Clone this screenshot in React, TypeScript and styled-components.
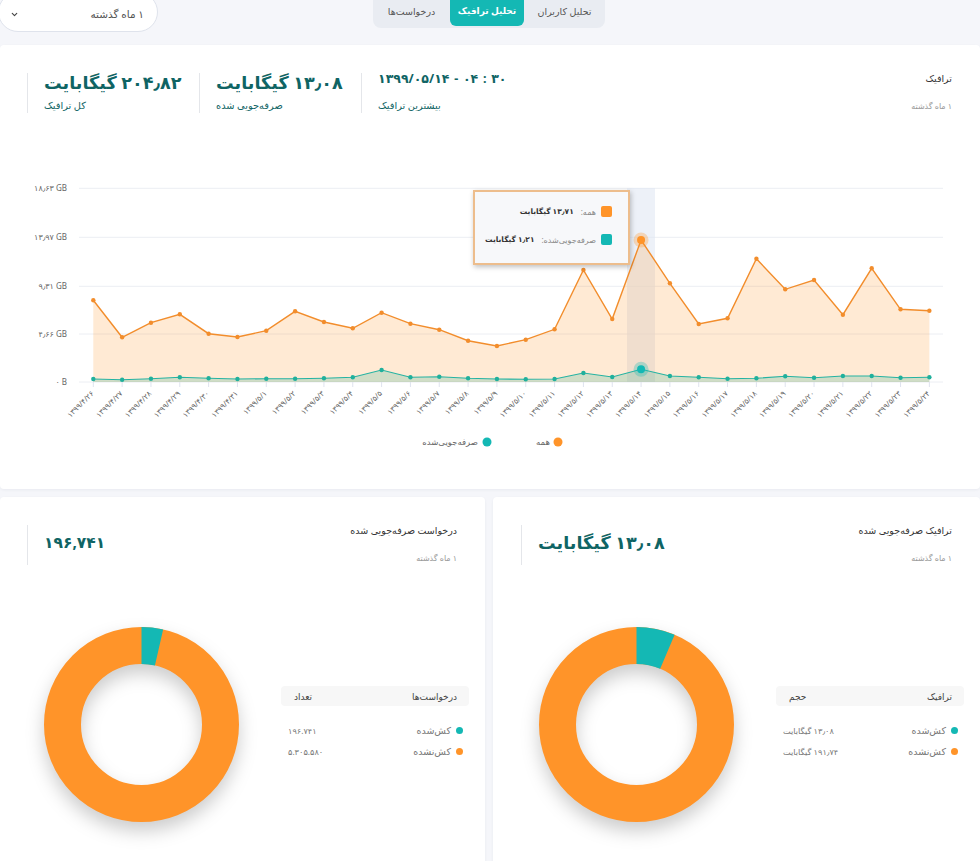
import * as React from 'react';
import styled, { createGlobalStyle } from 'styled-components';
import { ChevronDown } from 'lucide-react';

const ORANGE = '#ff9429';
const TEAL = '#14b8b4';

const GlobalStyle = createGlobalStyle`
	html, body {
		margin: 0;
		padding: 0;
		background: #f5f6fa;
	}
	body {
		font-family: "Noto Sans", "DejaVu Sans", sans-serif;
		color: #333;
	}
`;

const Page = styled.div`
	direction: rtl;
	width: 980px;
	height: 861px;
	overflow: hidden;
	background: #f5f6fa;
`;

const TopBar = styled.div`
	height: 45px;
	display: flex;
	align-items: flex-start;
`;

const Tabs = styled.div`
	display: flex;
	margin: -8px 375px 0 0;
	height: 36px;
	width: 232px;
	background: #e9ecf2;
	border-radius: 8px;
`;

const Tab = styled.div<{ $active?: boolean; $width: number }>`
	flex: 0 0 ${(p) => p.$width}px;
	display: flex;
	align-items: center;
	justify-content: center;
	padding-top: 3px;
	box-sizing: border-box;
	height: ${(p) => (p.$active ? '34px' : '36px')};
	border-radius: 6px;
	font-size: ${(p) => (p.$active ? '9px' : '9.5px')};
	font-weight: ${(p) => (p.$active ? 700 : 400)};
	color: ${(p) => (p.$active ? '#fff' : '#555')};
	background: ${(p) => (p.$active ? TEAL : 'transparent')};
`;

const Select = styled.div`
	margin: -8px auto 0 -2px;
	width: 160px;
	height: 40px;
	box-sizing: border-box;
	padding: 4px 13px 0 11px;
	background: #fff;
	border: 1px solid #dfe3ec;
	border-radius: 20px;
	display: flex;
	align-items: center;
	justify-content: space-between;
	font-size: 10.5px;
	color: #555;
`;

const Card = styled.section`
	position: relative;
	background: #fff;
	border-radius: 4px;
	box-shadow: 0 1px 3px rgba(40, 50, 90, 0.06);
`;

const TrafficCard = styled(Card)`
	height: 444px;
`;

const Header = styled.div<{ $left?: number }>`
	display: flex;
	justify-content: space-between;
	align-items: flex-start;
	padding: 28px 28px 0 ${(p) => p.$left ?? 27}px;
`;

const Titles = styled.div`
	display: flex;
	flex-direction: column;
	gap: 13px;
	margin-top: -1px;
`;

const Title = styled.div`
	font-size: 9.5px;
	line-height: 14px;
	color: #333;
`;

const Muted = styled.div`
	font-size: 8px;
	line-height: 14px;
	color: #999;
`;

const Stats = styled.div`
	display: flex;
`;

const Stat = styled.div<{ $width?: number }>`
	box-sizing: border-box;
	height: 40px;
	width: ${(p) => (p.$width ? `${p.$width}px` : 'auto')};
	padding-left: 16px;
	border-left: 1.5px solid #e4e6ea;
	display: flex;
	flex-direction: column;
	align-items: flex-end;
	justify-content: space-between;
`;

const StatValue = styled.div<{ $size?: number; $lift?: number }>`
	font-size: ${(p) => p.$size ?? 17.6}px;
	line-height: 18px;
	margin-top: ${(p) => p.$lift ?? 0}px;
	font-weight: 700;
	color: #0f6464;
	white-space: nowrap;
`;

const DateValue = styled(StatValue)`
	word-spacing: 1.5px;
`;

const StatLabel = styled.div`
	font-size: 9.8px;
	line-height: 12px;
	margin-bottom: 1px;
	color: #0f6464;
	white-space: nowrap;
`;

const ChartSvg = styled.svg`
	display: block;
	direction: ltr;
	text {
		font-family: "Noto Sans", "DejaVu Sans", sans-serif;
		fill: #666;
	}
`;

const Tooltip = styled.div`
	position: absolute;
	left: 473px;
	top: 145px;
	width: 157px;
	height: 75px;
	box-sizing: border-box;
	padding: 9px 16px 0 6px;
	display: flex;
	flex-direction: column;
	gap: 8px;
	background: #f7f8fa;
	border: 2px solid #edbd8c;
	box-shadow: 1px 2px 5px rgba(0, 0, 0, 0.25);
`;

const TipRow = styled.div`
	height: 20px;
	display: flex;
	align-items: center;
	gap: 5px;
	font-size: 8px;
	white-space: nowrap;
	color: #888;
	b {
		font-size: 7.5px;
		color: #333;
		margin-right: 2px;
	}
`;

const Swatch = styled.span<{ $color: string }>`
	flex: none;
	width: 11px;
	height: 11px;
	border-radius: 2px;
	background: ${(p) => p.$color};
`;

const Bottom = styled.div`
	display: grid;
	grid-template-columns: 487px 485px;
	gap: 8px;
	margin-top: 8px;
`;

const DonutCard = styled(Card)`
	height: 380px;
`;

const DonutBody = styled.div<{ $left: number }>`
	display: flex;
	justify-content: space-between;
	align-items: flex-start;
	margin-top: 62px;
	padding: 0 16px 0 ${(p) => p.$left}px;
`;

const Table = styled.div`
	width: 188px;
	margin-top: 59px;
	font-size: 9.5px;
	color: #777;
`;

const TableHead = styled.div`
	height: 20px;
	padding: 0 12px 0 13px;
	display: flex;
	align-items: center;
	justify-content: space-between;
	background: #f7f7f7;
	border-radius: 4px;
	font-size: 9px;
	color: #444;
`;

const TableRows = styled.div`
	display: flex;
	flex-direction: column;
	gap: 7px;
	margin-top: 17px;
`;

const TableRow = styled.div`
	height: 14px;
	padding: 0 6px 0 7px;
	display: flex;
	align-items: center;
	gap: 5px;
`;

const Dot = styled.span<{ $color: string }>`
	width: 7px;
	height: 7px;
	border-radius: 50%;
	background: ${(p) => p.$color};
`;

const RowValue = styled.span`
	margin-right: auto;
	font-size: 8.2px;
	color: #777;
`;

const fa = (v: string | number) => String(v).replace(/\d/g, (d) => '۰۱۲۳۴۵۶۷۸۹'[Number(d)]);

const orange = [300.3, 337.3, 322.7, 314.3, 333.7, 337, 330.7, 311.3, 322, 328.3, 312.7, 323.7, 329.7, 340.7, 346, 339.7, 329.3, 270, 319, 240, 283.3, 324, 318.3, 258.7, 289.3, 280, 314.7, 268.3, 309.3, 310.7];
const teal = [379, 379.7, 378.7, 377.3, 378.3, 379, 378.7, 378.7, 378.3, 377.3, 370, 377.3, 376.7, 378.3, 379, 379.3, 379, 373, 377, 369.3, 376, 377.3, 378.7, 378.3, 376.3, 377.7, 376, 376, 377.7, 377.3];
const BASE = 382;
const xAt = (i: number) => 93.3 + i * 28.83;
const dates = orange.map((_, i) => (i < 6 ? `1399/4/${26 + i}` : `1399/5/${i - 5}`));
const yTicks: [number, string][] = [[188.3, '18٫63 GB'], [237.3, '13٫97 GB'], [286.3, '9٫31 GB'], [334, '4٫66 GB'], [382, '0 B']];

const line = (ys: number[]) => ys.map((y, i) => `${xAt(i).toFixed(1)},${y}`).join(' ');
const area = (ys: number[]) => `${xAt(0)},${BASE} ${line(ys)} ${xAt(29)},${BASE}`;

const TrafficChart = () => (
	<ChartSvg width={980} height={376} viewBox="0 113 980 376">
		{yTicks.map(([y, label]) => (
			<g key={label}>
				<line x1={79} x2={943} y1={y} y2={y} stroke="#eceef3" />
				<text x={67} y={y + 3} fontSize={8} textAnchor="end">{fa(label)}</text>
			</g>
		))}
		<rect x={627} y={188} width={28} height={194} fill="#dfe6f2" opacity={0.55} />
		<polygon points={area(orange)} fill={ORANGE} opacity={0.2} />
		<polygon points={area(teal)} fill="#14a890" opacity={0.2} />
		<polyline points={line(orange)} fill="none" stroke="#f28d2c" strokeWidth={1.4} />
		<polyline points={line(teal)} fill="none" stroke="#25b3a2" strokeWidth={1.1} />
		{orange.map((y, i) => (i === 19 ? null : <circle key={i} cx={xAt(i)} cy={y} r={2.2} fill="#f28d2c" />))}
		{teal.map((y, i) => (i === 19 ? null : <circle key={i} cx={xAt(i)} cy={y} r={2.2} fill="#20b09c" />))}
		<circle cx={xAt(19)} cy={240} r={7.5} fill={ORANGE} opacity={0.3} />
		<circle cx={xAt(19)} cy={240} r={4} fill={ORANGE} />
		<circle cx={xAt(19)} cy={369.3} r={7.5} fill={TEAL} opacity={0.3} />
		<circle cx={xAt(19)} cy={369.3} r={4} fill={TEAL} />
		{dates.map((d, i) => (
			<g key={d}>
				<line x1={xAt(i)} x2={xAt(i)} y1={382} y2={387} stroke="#dfe3ee" />
				<text
					x={xAt(i) + 1}
					y={394}
					fontSize={7.5}
					textAnchor="end"
					transform={`rotate(-45 ${xAt(i) + 1} 394)`}
				>
					{fa(d)}
				</text>
			</g>
		))}
		<circle cx={558} cy={442} r={4.5} fill={ORANGE} />
		<text x={550} y={445} fontSize={8.5} textAnchor="start" direction="rtl">همه</text>
		<circle cx={487} cy={442} r={4.5} fill={TEAL} />
		<text x={478} y={445} fontSize={8.5} textAnchor="start" direction="rtl">صرفه‌جویی‌شده</text>
	</ChartSvg>
);

const DonutSvg = styled.svg`
	display: block;
	flex: none;
	overflow: visible;
	filter: drop-shadow(0 9px 9px rgba(0, 0, 0, 0.2));
`;

const Donut = ({ share }: { share: number }) => {
	const r = 79;
	const c = 2 * Math.PI * r;
	return (
		<DonutSvg width={195} height={195} viewBox="0 0 195 195">
			<circle cx={97.5} cy={97.5} r={r} fill="none" stroke={ORANGE} strokeWidth={37} />
			<circle
				cx={97.5}
				cy={97.5}
				r={r}
				fill="none"
				stroke={TEAL}
				strokeWidth={37}
				strokeDasharray={`${c * share} ${c}`}
				transform="rotate(-90 97.5 97.5)"
			/>
		</DonutSvg>
	);
};

interface PanelProps {
	title: string;
	stat: string;
	statSize?: number;
	head: [string, string];
	pulled: string;
	rest: string;
	share: number;
	headerLeft: number;
	donutLeft: number;
}

const DonutPanel = ({ title, stat, statSize, head, pulled, rest, share, headerLeft, donutLeft }: PanelProps) => (
	<DonutCard>
		<Header $left={headerLeft}>
			<Titles>
				<Title>{title}</Title>
				<Muted>۱ ماه گذشته</Muted>
			</Titles>
			<Stats>
				<Stat>
					<StatValue $size={statSize} $lift={8}>{stat}</StatValue>
				</Stat>
			</Stats>
		</Header>
		<DonutBody $left={donutLeft}>
			<Table>
				<TableHead>
					<span>{head[0]}</span>
					<span>{head[1]}</span>
				</TableHead>
				<TableRows>
					<TableRow>
						<Dot $color={TEAL} />
						<span>کش‌شده</span>
						<RowValue>{pulled}</RowValue>
					</TableRow>
					<TableRow>
						<Dot $color={ORANGE} />
						<span>کش‌نشده</span>
						<RowValue>{rest}</RowValue>
					</TableRow>
				</TableRows>
			</Table>
			<Donut share={share} />
		</DonutBody>
	</DonutCard>
);

export default function App() {
	return (
		<Page>
			<GlobalStyle />
			<TopBar>
				<Tabs>
					<Tab $width={81}>تحلیل کاربران</Tab>
					<Tab $width={74} $active>تحلیل ترافیک</Tab>
					<Tab $width={77}>درخواست‌ها</Tab>
				</Tabs>
				<Select>
					<span>۱ ماه گذشته</span>
					<ChevronDown size={9} strokeWidth={3} color="#444" />
				</Select>
			</TopBar>
			<TrafficCard>
				<Header>
					<Titles>
						<Title>ترافیک</Title>
						<Muted>۱ ماه گذشته</Muted>
					</Titles>
					<Stats>
						<Stat $width={163}>
							<DateValue $size={12.5} $lift={-3} dir="ltr">۱۳۹۹/۰۵/۱۴ - ۰۴ : ۳۰</DateValue>
							<StatLabel>بیشترین ترافیک</StatLabel>
						</Stat>
						<Stat $width={162}>
							<StatValue>۱۳٫۰۸ گیگابایت</StatValue>
							<StatLabel>صرفه‌جویی شده</StatLabel>
						</Stat>
						<Stat $width={172}>
							<StatValue>۲۰۴٫۸۲ گیگابایت</StatValue>
							<StatLabel>کل ترافیک</StatLabel>
						</Stat>
					</Stats>
				</Header>
				<TrafficChart />
				<Tooltip>
					<TipRow>
						<Swatch $color={ORANGE} />
						<span>همه:</span>
						<b>۱۳٫۷۱ گیگابایت</b>
					</TipRow>
					<TipRow>
						<Swatch $color={TEAL} />
						<span>صرفه‌جویی‌شده:</span>
						<b>۱٫۲۱ گیگابایت</b>
					</TipRow>
				</Tooltip>
			</TrafficCard>
			<Bottom>
				<DonutPanel
					title="ترافیک صرفه‌جویی شده"
					stat="۱۳٫۰۸ گیگابایت"
					head={['ترافیک', 'حجم']}
					pulled="۱۳٫۰۸ گیگابایت"
					rest="۱۹۱٫۷۴ گیگابایت"
					share={0.0639}
					headerLeft={28}
					donutLeft={46}
				/>
				<DonutPanel
					title="درخواست صرفه‌جویی شده"
					stat="۱۹۶,۷۴۱"
					statSize={15.5}
					head={['درخواست‌ها', 'تعداد']}
					pulled="۱۹۶.۷۴۱"
					rest="۵.۳۰۵.۵۸۰"
					share={0.0357}
					headerLeft={27}
					donutLeft={44}
				/>
			</Bottom>
		</Page>
	);
}
